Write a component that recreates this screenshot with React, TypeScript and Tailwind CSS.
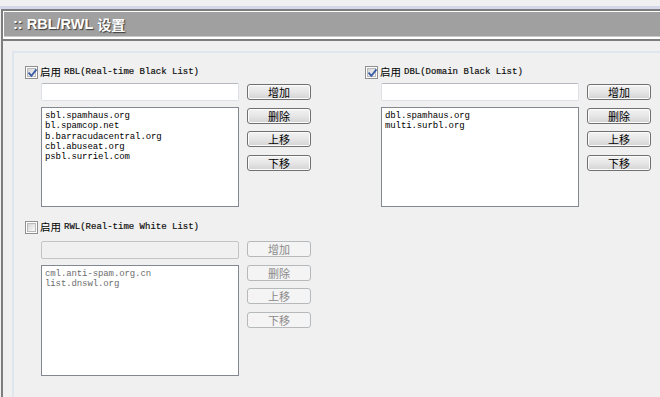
import React from "react";

function Check({ checked }: { checked: boolean }) {
  return (
    <span className="relative flex-none w-[13px] h-[13px] border border-[#8f8f8f] bg-white p-[1px] flex">
      <span className="flex-1 bg-linear-to-br from-[#d4d4d4] via-[#e8e8e8] to-[#fafafa] border border-[#b9b9b9]" />
      {checked && (
        <svg className="absolute left-[1px] top-[1px]" width="11" height="11" viewBox="0 0 11 11">
          <path d="M2.2 5.3 L4.4 7.8 L8.9 2.2" fill="none" stroke="#3b5ea6" strokeWidth="1.9" strokeLinecap="square" />
        </svg>
      )}
    </span>
  );
}

function Btn({ label, disabled, cls }: { label: string; disabled: boolean; cls: string }) {
  return (
    <div
      className={
        disabled
          ? `h-[16px] w-[64px] rounded-[3px] border border-[#b5b9bc] bg-[#f4f4f4] text-[#8a8a8a] flex items-center justify-center text-[11px] leading-none font-['Noto_Sans_CJK_SC',sans-serif] ${cls}`
          : `h-[16px] w-[64px] rounded-[3px] border border-[#707070] bg-linear-to-b from-[#f3f3f3] via-[#e6e6e6] to-[#d3d3d3] shadow-[inset_0_0_0_1px_#fcfcfc] text-black flex items-center justify-center text-[11px] leading-none font-['Noto_Sans_CJK_SC',sans-serif] ${cls}`
      }
    >
      {label}
    </div>
  );
}

function Block({
  checked,
  code,
  items,
  disabled,
  listH,
  inputGap,
  btnPad,
}: {
  checked: boolean;
  code: string;
  items: string[];
  disabled: boolean;
  listH: string;
  inputGap: string;
  btnPad: string;
}) {
  return (
    <div className="flex flex-col">
      <div className="flex items-center h-[13px]">
        <Check checked={checked} />
        <span className="ml-[2px] text-[10.5px] leading-none text-black font-['Noto_Sans_CJK_SC',sans-serif]">启用</span>
        <span className="ml-[3px] text-[9px] leading-none text-[#111] font-['Liberation_Mono',monospace] whitespace-pre [-webkit-text-stroke:0.2px_#111]">{code}</span>
      </div>
      <div className={`ml-[16px] flex gap-[8px] ${inputGap}`}>
        <div className="flex flex-col gap-[6px]">
          <div
            className={
              disabled
                ? "h-[18px] w-[198px] rounded-[2px] border border-[#c4c4c4] bg-[#f0f0f0]"
                : "h-[18px] w-[198px] rounded-[2px] border border-[#dde1e6] border-t-[#b6b9bf] bg-white"
            }
          />
          <div
            className={`${listH} w-[198px] border border-[#828790] bg-white px-[3px] pt-[3px] text-[9px] leading-[10.3px] font-['Liberation_Mono',monospace] tracking-[-0.1px] ${
              disabled ? "text-[#6d6d6d]" : "text-black"
            }`}
          >
            {items.map((t) => (
              <div key={t}>{t}</div>
            ))}
          </div>
        </div>
        <div className={`flex flex-col ${btnPad}`}>
          <Btn label="增加" disabled={disabled} cls="" />
          <Btn label="删除" disabled={disabled} cls="mt-[8px]" />
          <Btn label="上移" disabled={disabled} cls="mt-[7px]" />
          <Btn label="下移" disabled={disabled} cls="mt-[8px]" />
        </div>
      </div>
    </div>
  );
}

export default function App() {
  return (
    <div className="w-[660px] h-[397px] bg-[#f0f0f0] overflow-hidden">
      <div className="h-[6px]" />
      <div className="h-[3px] bg-[#d4d8ea]" />
      <div className="ml-[1px] h-[388px] border-l-2 border-[#7d7d7d] flex flex-col">
        <div className="border-y-2 border-[#7d7d7d]">
          <div className="border-l border-t border-white">
            <div className="h-[24px] bg-[#a0a0a0] flex items-center pl-[9px] text-white font-bold text-[14.5px] leading-none font-['Liberation_Sans','Noto_Sans_CJK_SC',sans-serif] [text-shadow:1px_1px_1px_#3a3a3a]">
              <span>:: RBL/RWL&nbsp;</span>
              <span className="font-['Noto_Sans_CJK_SC',sans-serif] text-[14px]">设置</span>
            </div>
            <div className="h-[1px] bg-[#cacaca]" />
            <div className="h-[2px] bg-white" />
          </div>
        </div>
        <div className="mt-[10px] ml-[9px] flex-1 border-t-2 border-l-2 border-[#dfe6ee] pl-[11px] pt-[13px]">
          <div className="flex">
            <div className="w-[340px]">
              <Block
                checked={true}
                code="RBL(Real-time Black List)"
                items={["sbl.spamhaus.org", "bl.spamcop.net", "b.barracudacentral.org", "cbl.abuseat.org", "psbl.surriel.com"]}
                disabled={false}
                listH="h-[100px]"
                inputGap="mt-[4px]"
                btnPad="pt-[1px]"
              />
            </div>
            <Block
              checked={true}
              code="DBL(Domain Black List)"
              items={["dbl.spamhaus.org", "multi.surbl.org"]}
              disabled={false}
              listH="h-[100px]"
              inputGap="mt-[4px]"
              btnPad="pt-[1px]"
            />
          </div>
          <div className="mt-[14px]">
            <Block
              checked={false}
              code="RWL(Real-time White List)"
              items={["cml.anti-spam.org.cn", "list.dnswl.org"]}
              disabled={true}
              listH="h-[111px]"
              inputGap="mt-[7px]"
              btnPad="pt-0"
            />
          </div>
        </div>
      </div>
    </div>
  );
}
